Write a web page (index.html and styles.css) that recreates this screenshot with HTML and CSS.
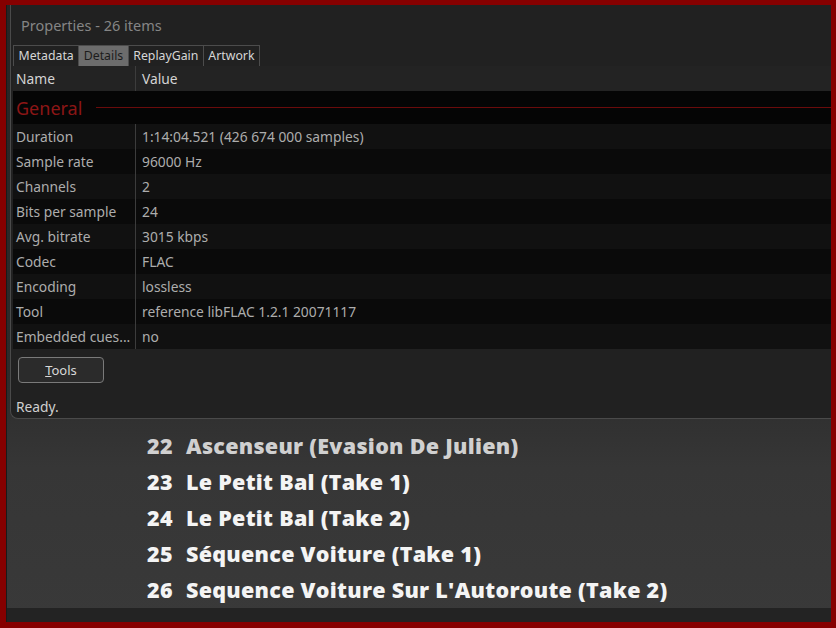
FILE: index.html
```html
<!DOCTYPE html>
<html lang="en">
<head>
    <meta charset="UTF-8">
    <title>Properties - 26 items</title>
    <link rel="stylesheet" href="styles.css">
</head>
<body>
    <div class="screen">
        <div class="props">
            <div class="title">Properties - 26 items</div>
            <div class="tabs">
                <span class="tab">Metadata</span>
                <span class="tab active">Details</span>
                <span class="tab">ReplayGain</span>
                <span class="tab">Artwork</span>
            </div>
            <div class="list">
                <div class="head">
                    <span class="c-name">Name</span>
                    <span class="c-value">Value</span>
                </div>
                <div class="group"><span>General</span><i></i></div>
                <div class="row"><span class="c-name">Duration</span><span class="c-value">1:14:04.521 (426 674 000 samples)</span></div>
                <div class="row"><span class="c-name">Sample rate</span><span class="c-value">96000 Hz</span></div>
                <div class="row"><span class="c-name">Channels</span><span class="c-value">2</span></div>
                <div class="row"><span class="c-name">Bits per sample</span><span class="c-value">24</span></div>
                <div class="row"><span class="c-name">Avg. bitrate</span><span class="c-value">3015 kbps</span></div>
                <div class="row"><span class="c-name">Codec</span><span class="c-value">FLAC</span></div>
                <div class="row"><span class="c-name">Encoding</span><span class="c-value">lossless</span></div>
                <div class="row"><span class="c-name">Tool</span><span class="c-value">reference libFLAC 1.2.1 20071117</span></div>
                <div class="row"><span class="c-name">Embedded cues...</span><span class="c-value">no</span></div>
            </div>
            <div class="foot">
                <button class="btn"><u>T</u>ools</button>
                <div class="status">Ready.</div>
            </div>
        </div>
        <div class="tracks">
            <div class="track dim"><span class="num">22</span>Ascenseur (Evasion De Julien)</div>
            <div class="track"><span class="num">23</span>Le Petit Bal (Take 1)</div>
            <div class="track"><span class="num">24</span>Le Petit Bal (Take 2)</div>
            <div class="track"><span class="num">25</span>Séquence Voiture (Take 1)</div>
            <div class="track"><span class="num">26</span>Sequence Voiture Sur L'Autoroute (Take 2)</div>
        </div>
        <div class="band"></div>
    </div>
</body>
</html>
```

FILE: styles.css
```css
html, body { margin: 0; height: 100%; }
body { background: #860000; font-family: "Noto Sans", "Open Sans", sans-serif; padding: 5px 5px 6px 6px; box-sizing: border-box; overflow: hidden; }
.screen { height: 100%; display: flex; flex-direction: column; background: linear-gradient(#262626 0%, #2c2c2c 60%, #363636 75%, #393939 100%); border-left: 1px solid #1a1a1a; }

.props { margin-left: 3px; height: 414px; box-sizing: border-box; background: #212121; border: 1px solid #4a4a4a; border-right: none; border-top: none; border-radius: 0 0 0 8px; display: flex; flex-direction: column; padding-left: 2px; }
.title { height: 40px; line-height: 40px; padding-left: 8px; font-size: 14.5px; color: #858585; }

.tabs { display: flex; height: 21px; }
.tab { font-size: 12.3px; line-height: 20px; color: #d6d6d6; padding: 0 4.5px; border: 1px solid #4c4c4c; border-bottom: none; border-left: none; }
.tab:first-child { border-left: 1px solid #4c4c4c; }
.tab.active { background: #6c6c6c; color: #1c1c1c; }

.list { flex: 1; background: #050505; font-size: 13.8px; color: #adadad; }
.head { height: 25px; background: #232323; display: flex; align-items: center; color: #d4d4d4; }
.head .c-value, .row .c-value { border-left: 1px solid #3c3c3c; align-self: stretch; display: flex; align-items: center; }
.c-name { width: 119px; padding-left: 3px; flex: none; white-space: nowrap; overflow: hidden; }
.c-value { padding-left: 6px; }
.group { height: 33px; display: flex; align-items: center; color: #8c1616; font-size: 18px; padding-left: 3px; }
.group i { flex: 1; height: 1px; background: #6a0b0b; margin-left: 14px; }
.row { height: 25px; display: flex; align-items: center; }
.row:nth-child(odd) { background: #111111; }
.row:nth-child(even) { background: #0a0a0a; }

.foot { height: 70px; padding: 8px 0 0 5px; box-sizing: border-box; }
.btn { width: 86px; height: 26px; background: #2b2b2b; border: 1px solid #7a7a7a; border-radius: 4px; color: #d8d8d8; font-family: inherit; font-size: 13px; padding: 0; }
.status { margin-top: 14px; margin-left: -2px; font-size: 13.8px; color: #cfcfcf; }

.tracks { padding: 9px 0 0 140px; flex: 1; }
.track { height: 36px; line-height: 36px; font-family: "Open Sans", sans-serif; font-weight: 800; font-size: 21.5px; letter-spacing: 0.28px; color: #f4f4f4; white-space: nowrap; }
.track.dim { color: #d0d0d0; }
.num { display: inline-block; width: 39px; }
.band { height: 15px; background: #232323; }
```
